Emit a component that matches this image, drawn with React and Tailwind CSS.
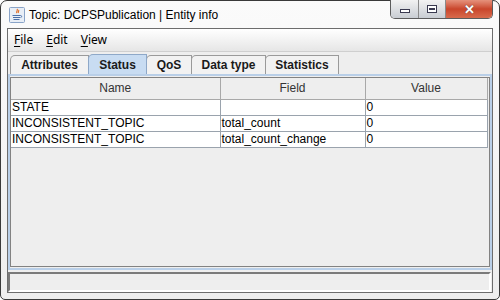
import React from 'react';

const rows = [
  { name: 'STATE', field: '', value: '0' },
  { name: 'INCONSISTENT_TOPIC', field: 'total_count', value: '0' },
  { name: 'INCONSISTENT_TOPIC', field: 'total_count_change', value: '0' },
];

const tabs = ['Attributes', 'Status', 'QoS', 'Data type', 'Statistics'];
const tabWidths = ['w-[79px]', 'w-[59px]', 'w-[46px]', 'w-[75px]', 'w-[74px]'];

function JavaIcon() {
  return (
    <svg width="16" height="16" viewBox="0 0 16 16" className="shrink-0">
      <rect x="0.5" y="0.5" width="15" height="15" rx="1" fill="#e8eef6" stroke="#8aa4c8" />
      <path d="M8 2c1.5 1.5-1.5 2.5 0 4M9.5 3c1 1-1 1.7 0 3" stroke="#e0702a" strokeWidth="1.2" fill="none" />
      <path d="M3.5 8.5h8M4 10.5h7M4.5 12.5h6" stroke="#4a6fa8" strokeWidth="1" />
      <path d="M11.5 8.5c1.5 0 1.5 2 0 2" stroke="#4a6fa8" fill="none" />
    </svg>
  );
}

function Mnemonic({ first, rest }) {
  return (
    <span>
      <span className="underline underline-offset-2">{first}</span>
      {rest}
    </span>
  );
}

export default function App() {
  return (
    <div className="w-[500px] h-[300px] bg-white">
      <div className="w-full h-full flex flex-col border border-[#3a3a3a] rounded-t-[7px] rounded-b-[5px] bg-gradient-to-b from-[#fbfbfb] to-[#eeeeee] [font-family:'Liberation_Sans',Arial,sans-serif]">
        {/* Title bar */}
        <div className="h-[27px] flex items-start shrink-0">
          <div className="flex items-center gap-[4px] pl-[8px] pt-[6px]">
            <JavaIcon />
            <span className="text-[12px] text-black leading-none">
              Topic: DCPSPublication | Entity info
            </span>
          </div>
          <div className="ml-auto mr-[6px] flex h-[19px] -mt-px border border-[#5c5c5c] border-t-0 rounded-b-[5px] overflow-hidden">
            <div className="w-[28px] flex items-center justify-center bg-gradient-to-b from-[#f2f2f2] to-[#c9cdd3] border-r border-[#8a8a8a]">
              <div className="w-[10px] h-[4px] border border-[#3a3a50] bg-white mt-[4px]"></div>
            </div>
            <div className="w-[27px] flex items-center justify-center bg-gradient-to-b from-[#f2f2f2] to-[#c9cdd3] border-r border-[#8a8a8a]">
              <div className="w-[10px] h-[8px] border border-[#3a3a50] bg-white flex items-center justify-center">
                <div className="w-[6px] h-[2px] border border-[#3a3a50]"></div>
              </div>
            </div>
            <div className="w-[46px] flex items-center justify-center bg-gradient-to-b from-[#e5917c] via-[#c9452b] to-[#d86a4c]">
              <span className="text-white font-bold text-[13px] leading-none [text-shadow:0_0_1px_#333]">✕</span>
            </div>
          </div>
        </div>

        {/* Client area */}
        <div className="flex-1 mx-[6px] mb-[6px] border border-[#6d6d6d] bg-[#eeeeee] flex flex-col">
          {/* Menu bar */}
          <div className="h-[23px] shrink-0 flex items-center gap-[13px] pl-[6px] bg-gradient-to-b from-[#ffffff] to-[#e6e6e6] border-b border-[#cfcfcf] text-[12px] text-black [font-family:'Noto_Sans',sans-serif]">
            <Mnemonic first="F" rest="ile" />
            <Mnemonic first="E" rest="dit" />
            <Mnemonic first="V" rest="iew" />
          </div>

          {/* Tabs */}
          <div className="flex items-end h-[22px] pl-[2px] pt-[2px] shrink-0">
            {tabs.map((t, i) => {
              const sel = t === 'Status';
              return (
                <div
                  key={t}
                  className={`${tabWidths[i]} h-[19px] flex items-center justify-center text-[12px] font-bold text-[#1a1a1a] border border-b-0 rounded-tl-[5px] -mr-px ${
                    sel ? 'bg-[#c8dcf2] border-[#8ea8c8] h-[20px] z-10' : 'bg-[#f2f2f2] border-[#9a9a9a]'
                  }`}
                >
                  {t}
                </div>
              );
            })}
          </div>

          {/* Tab panel */}
          <div className="flex-1 border-2 border-[#b9cfe8] flex flex-col">
            <div className="flex-1 border border-[#828282] bg-[#eeeeee] mt-[1px] mb-[1px] flex flex-col">
              <table className="w-[476px] border-collapse text-[12px] text-black table-fixed">
                <colgroup>
                  <col className="w-[209px]" />
                  <col className="w-[145px]" />
                  <col className="w-[122px]" />
                </colgroup>
                <thead>
                  <tr className="h-[21px] bg-[#eeeeee]">
                    <th className="font-normal text-[#333] border-r border-b border-[#a8a8a8] text-center">Name</th>
                    <th className="font-normal text-[#333] border-r border-b border-[#a8a8a8] text-center">Field</th>
                    <th className="font-normal text-[#333] border-r border-b border-[#a8a8a8] text-center">Value</th>
                  </tr>
                </thead>
                <tbody>
                  {rows.map((r, i) => (
                    <tr key={i} className="h-[16px] bg-white leading-[15px]">
                      <td className="px-[1px] border-r border-b border-[#9aa3ad] whitespace-nowrap">{r.name}</td>
                      <td className="px-[1px] border-r border-b border-[#9aa3ad] whitespace-nowrap">{r.field}</td>
                      <td className="px-[1px] border-r border-b border-[#9aa3ad] whitespace-nowrap">{r.value}</td>
                    </tr>
                  ))}
                </tbody>
              </table>
            </div>
          </div>

          {/* Status bar */}
          <div className="h-[20px] shrink-0 mt-[2px] mr-[1px] border-t-2 border-l-2 border-[#7a7a7a] border-b-2 border-b-white border-r-2 border-r-white bg-[#eeeeee]"></div>
        </div>
      </div>
    </div>
  );
}
